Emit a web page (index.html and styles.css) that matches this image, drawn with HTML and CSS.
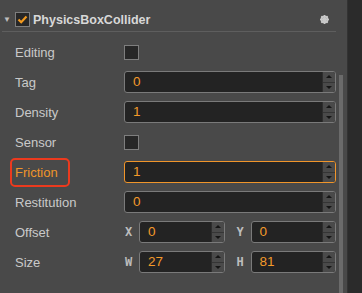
FILE: index.html
```html
<!DOCTYPE html>
<html lang="en">
<head>
    <meta charset="UTF-8">
    <title>PhysicsBoxCollider</title>
    <link rel="stylesheet" href="styles.css">
</head>
<body>
    <div class="inspector">
        <div class="panel">
            <div class="header">
                <span class="fold">&#9660;</span>
                <span class="check on">
                    <svg width="11" height="9" viewBox="0 0 11 9"><path d="M1.5 4.5 L4.2 7.2 L9.5 1.5" fill="none" stroke="#f39a1e" stroke-width="2.2"/></svg>
                </span>
                <span class="title">PhysicsBoxCollider</span>
                <svg class="gear" width="9" height="9" viewBox="0 0 10 10">
                    <circle cx="5" cy="5" r="3.4" fill="none" stroke="#c8c8c8" stroke-width="2"/>
                    <path d="M5 0 V10 M0 5 H10 M1.5 1.5 L8.5 8.5 M8.5 1.5 L1.5 8.5" stroke="#c8c8c8" stroke-width="1.6"/>
                </svg>
            </div>

            <div class="rows">
                <div class="row">
                    <div class="label">Editing</div>
                    <div class="value"><span class="check"></span></div>
                </div>
                <div class="row">
                    <div class="label">Tag</div>
                    <div class="value">
                        <div class="num"><span class="txt">0</span><span class="spin"><i class="up"></i><i class="down"></i></span></div>
                    </div>
                </div>
                <div class="row">
                    <div class="label">Density</div>
                    <div class="value">
                        <div class="num"><span class="txt">1</span><span class="spin"><i class="up"></i><i class="down"></i></span></div>
                    </div>
                </div>
                <div class="row">
                    <div class="label">Sensor</div>
                    <div class="value"><span class="check"></span></div>
                </div>
                <div class="row">
                    <div class="label"><span class="mark">Friction</span></div>
                    <div class="value">
                        <div class="num focus"><span class="txt">1</span><span class="spin"><i class="up"></i><i class="down"></i></span></div>
                    </div>
                </div>
                <div class="row">
                    <div class="label">Restitution</div>
                    <div class="value">
                        <div class="num"><span class="txt">0</span><span class="spin"><i class="up"></i><i class="down"></i></span></div>
                    </div>
                </div>
                <div class="row">
                    <div class="label">Offset</div>
                    <div class="value vec">
                        <div class="axis"><span class="key">X</span><div class="num"><span class="txt">0</span><span class="spin"><i class="up"></i><i class="down"></i></span></div></div>
                        <div class="axis"><span class="key">Y</span><div class="num"><span class="txt">0</span><span class="spin"><i class="up"></i><i class="down"></i></span></div></div>
                    </div>
                </div>
                <div class="row">
                    <div class="label">Size</div>
                    <div class="value vec">
                        <div class="axis"><span class="key">W</span><div class="num"><span class="txt">27</span><span class="spin"><i class="up"></i><i class="down"></i></span></div></div>
                        <div class="axis"><span class="key">H</span><div class="num"><span class="txt">81</span><span class="spin"><i class="up"></i><i class="down"></i></span></div></div>
                    </div>
                </div>
            </div>
            <div class="scrollbar"></div>
        </div>
        <div class="side"></div>
    </div>
</body>
</html>
```

FILE: styles.css
```css
* {
    box-sizing: border-box;
}

body {
    margin: 0;
    background: #494949;
    font-family: "Liberation Sans", Arial, sans-serif;
    font-size: 13px;
    color: #c9c9c9;
}

.inspector {
    display: flex;
    height: 293px;
    overflow: hidden;
}

.panel {
    position: relative;
    width: 347px;
    padding: 0 11px 0 0;
}

.side {
    flex: 1;
    background: #2b2b2b;
    border-left: 1px solid #333333;
}

/* component header */
.header {
    display: flex;
    align-items: center;
    height: 32px;
    margin-left: 2px;
    padding: 8px 0 0 0;
    border-bottom: 1px solid #5e5e5e;
}

.fold {
    font-size: 8px;
    color: #bdbdbd;
    width: 13px;
    padding-left: 1px;
}

.title {
    margin-left: 3px;
    font-weight: bold;
    font-size: 12.5px;
    color: #d8d8d8;
}

.gear {
    margin-left: auto;
    margin-right: 7px;
}

.check {
    display: inline-flex;
    align-items: center;
    justify-content: center;
    width: 15px;
    height: 15px;
    background: #272727;
    border: 1px solid #7e7e7e;
}

/* property rows */
.rows {
    padding-top: 5px;
}

.row {
    display: flex;
    align-items: center;
    height: 30px;
}

.label {
    width: 124px;
    padding-left: 15px;
}

.mark {
    display: inline-block;
    margin-left: -5px;
    padding: 4px 10px 4px 3px;
    line-height: 17px;
    color: #f0952a;
    border: 2px solid #ec3a1e;
    border-radius: 5px;
}

.value {
    flex: 1;
    display: flex;
    align-items: center;
}

.num {
    flex: 1;
    display: flex;
    height: 22px;
    background: #232323;
    border: 1px solid #7a7a7a;
    border-radius: 3px;
    overflow: hidden;
}

.num.focus {
    border-color: #f0952a;
}

.txt {
    flex: 1;
    padding-left: 8px;
    line-height: 20px;
    color: #f39a2a;
    font-size: 13.5px;
}

.spin {
    display: flex;
    flex-direction: column;
    width: 13px;
    background: #4a4a4a;
    border-left: 1px solid #2e2e2e;
}

.spin i {
    flex: 1;
    display: flex;
    align-items: center;
    justify-content: center;
}

.spin .up {
    border-bottom: 1px solid #353535;
}

.spin .up::before,
.spin .down::before {
    content: "";
    border-left: 3.5px solid transparent;
    border-right: 3.5px solid transparent;
}

.spin .up::before {
    border-bottom: 3px solid #151515;
}

.spin .down::before {
    border-top: 3px solid #151515;
}

.vec {
    gap: 11px;
}

.axis {
    flex: 1;
    display: flex;
    align-items: center;
}

.key {
    width: 15px;
    font-family: "DejaVu Sans Mono", monospace;
    font-weight: bold;
    font-size: 12px;
    color: #bdbdbd;
    padding-left: 1px;
}

.scrollbar {
    position: absolute;
    left: 339px;
    top: 75px;
    bottom: 0;
    width: 4px;
    background: #6b6b6b;
}
```
